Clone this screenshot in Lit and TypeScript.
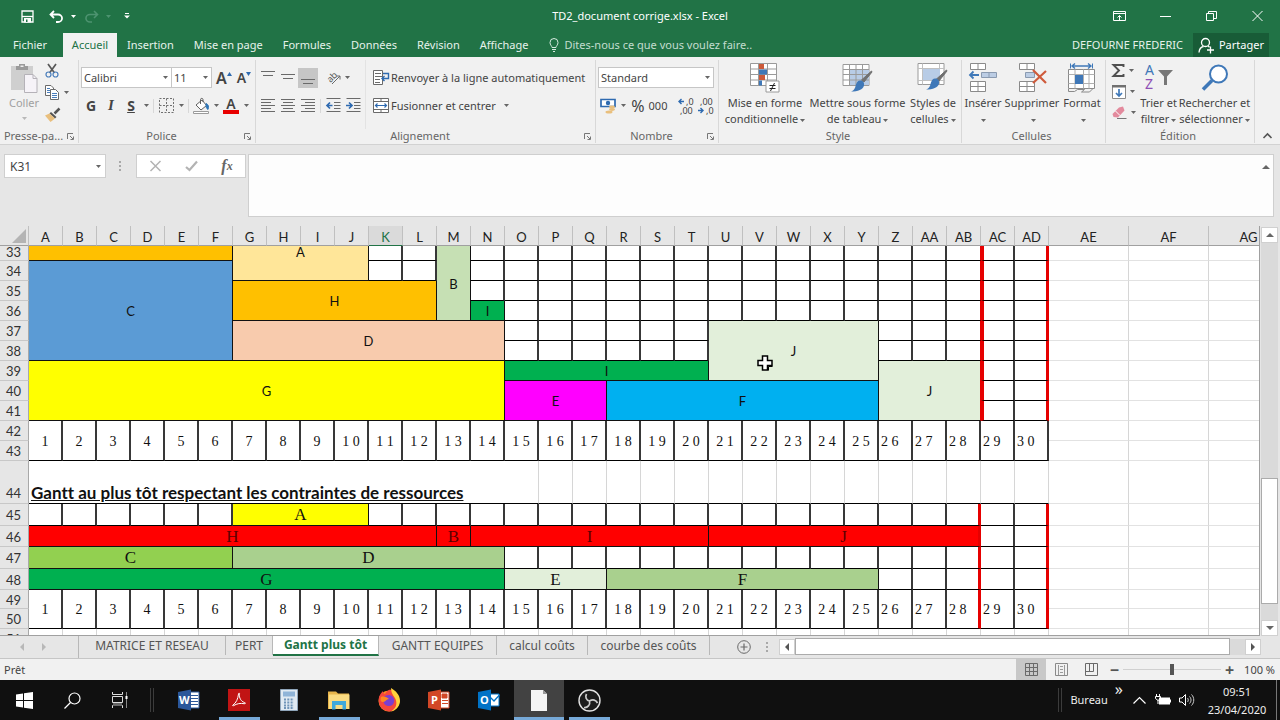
import { LitElement, html, svg, css, nothing } from "lit";
import { customElement, state } from "lit/decorators.js";
import { classMap } from "lit/directives/class-map.js";

type Cell = { text?: string; cls?: string; cols?: number; rows?: number; pointer?: boolean };
type Row = { n: number; size: string; cells: Cell[] };

const COLUMNS = [..."ABCDEFGHIJKLMNOPQRSTUVWXYZ", "AA", "AB", "AC", "AD", "AE", "AF", "AG"];

const box = (count: number): Cell[] => Array.from({ length: count }, () => ({ cls: "box" }));
const faint = (count: number): Cell[] => Array.from({ length: count }, () => ({ cls: "faint" }));
const bar = (text: string, cols: number, rows: number, fill: string, extra = ""): Cell => ({
  text, cols, rows, cls: `bar ${fill} ${extra}`,
});
const limit: Cell[] = [{ cls: "box late" }, { cls: "box end" }];
const limitLow: Cell[] = [{ cls: "box" }, { cls: "box end" }];
const tail = faint(3);

const days = (last: string, end: string): Cell[] =>
  Array.from({ length: 30 }, (_, i) => ({
    text: String(i + 1).split("").join(" "),
    rows: 2,
    cls: `box day ${i > 24 ? "near" : ""} ${i === 27 ? last : ""} ${i === 29 ? end : ""}`,
  }));

const ROWS: Row[] = [
  { n: 33, size: "cut", cells: [bar("", 6, 1, "orange"), bar("A", 4, 2, "cream", "top"), ...box(2), bar("B", 1, 4, "sage"), ...box(14), { cls: "box before" }, ...limit, ...tail] },
  { n: 34, size: "std", cells: [bar("C", 6, 5, "blue"), ...box(2), ...box(14), { cls: "box before" }, ...limit, ...tail] },
  { n: 35, size: "std", cells: [bar("H", 6, 2, "orange"), ...box(14), { cls: "box before" }, ...limit, ...tail] },
  { n: 36, size: "std", cells: [bar("I", 1, 1, "green"), ...box(13), { cls: "box before" }, ...limit, ...tail] },
  { n: 37, size: "std", cells: [bar("D", 8, 2, "peach"), ...box(6), { ...bar("J", 5, 3, "mint"), pointer: true }, ...box(2), { cls: "box before" }, ...limit, ...tail] },
  { n: 38, size: "std", cells: [...box(6), ...box(2), { cls: "box before" }, ...limit, ...tail] },
  { n: 39, size: "std", cells: [bar("G", 14, 3, "yellow"), bar("I", 6, 1, "green"), bar("J", 3, 3, "mint", "before"), ...limit, ...tail] },
  { n: 40, size: "std", cells: [bar("E", 3, 2, "magenta"), bar("F", 8, 2, "sky"), ...limit, ...tail] },
  { n: 41, size: "std", cells: [...limit, ...tail] },
  { n: 42, size: "std", cells: [...days("", ""), ...tail] },
  { n: 43, size: "std", cells: tail },
  { n: 44, size: "tall", cells: [{ text: "Gantt au plus tôt respectant les contraintes de ressources", cols: 14, cls: "heading" }, ...Array.from({ length: 16 }, () => ({ cls: "faint over" })), ...tail] },
  { n: 45, size: "big", cells: [...box(6), bar("A", 4, 1, "yellow", "serif"), ...box(17), { cls: "box low" }, ...limitLow, ...tail] },
  { n: 46, size: "mid", cells: [bar("H", 12, 1, "red", "serif"), bar("B", 1, 1, "red", "serif"), bar("I", 7, 1, "red", "serif"), bar("J", 8, 1, "red", "serif low"), ...limitLow, ...tail] },
  { n: 47, size: "big", cells: [bar("C", 6, 1, "lime", "serif"), bar("D", 8, 1, "leaf", "serif"), ...box(13), { cls: "box low" }, ...limitLow, ...tail] },
  { n: 48, size: "mid", cells: [bar("G", 14, 1, "green", "serif"), bar("E", 3, 1, "mint", "serif"), bar("F", 8, 1, "leaf", "serif"), ...box(2), { cls: "box low" }, ...limitLow, ...tail] },
  { n: 49, size: "small", cells: [...days("low", "end"), ...tail] },
  { n: 50, size: "std", cells: tail },
  { n: 51, size: "std", cells: faint(33) },
];

const icon = (w: number, h: number, body: unknown, cls = "") =>
  html`<svg class=${cls} width=${w} height=${h} viewBox="0 0 ${w} ${h}" fill="none" aria-hidden="true">${body}</svg>`;

const caret = html`<svg class="caret" width="5" height="3" viewBox="0 0 5 3" aria-hidden="true"><path d="M0 0h5L2.500 3z" fill="currentColor" /></svg>`;

const lines = (rows: [number, number, number][]) =>
  icon(14, 16, svg`${rows.map(([x, y, w]) => svg`<path d="M${x} ${y}.5h${w}" stroke="#6a6a6a" />`)}`);

const ICONS = {
  save: icon(13, 13, svg`<path d="M1 1h11v11H1z" stroke="#fff" stroke-width="1.300"/><path d="M1 6.500h11" stroke="#fff" stroke-width="1.300"/><path d="M3 8h7v4.500H3z" fill="#fff"/><path d="M5 9.500h1.500V12H5z" fill="#217346"/>`),
  undo: icon(15, 13, svg`<path d="M5 1 1.500 4.500 5 8M2 4.500h7a4 3.700 0 0 1 0 7.500H7" stroke="#fff" stroke-width="1.800"/>`),
  redo: icon(15, 13, svg`<path d="m10 1 3.500 3.500L10 8M13 4.500H6A4 3.700 0 0 0 6 12h2" stroke="#4d9370" stroke-width="1.600"/>`),
  qat: icon(6, 6, svg`<path d="M1 .5h4" stroke="#fff"/><path d="M0 2.500h6L3 5.500z" fill="#fff"/>`),
  display: icon(13, 10, svg`<path d="M.5.5h12v9H.5zM.5 2.500h12M6.500 9V4.500M4.500 6.500l2-2 2 2" stroke="#fff"/>`),
  min: icon(11, 10, svg`<path d="M0 5.500h11" stroke="#fff"/>`),
  restore: icon(11, 10, svg`<path d="M.5 2.500h7v7h-7zM2.500 2.500v-2h8v7h-3" stroke="#fff"/>`),
  close: icon(11, 10, svg`<path d="m.5 0 10 10M10.500 0l-10 10" stroke="#fff"/>`),
  bulb: icon(10, 14, svg`<path d="M3 9.500C3 8 1 7 1 4.500a4 4 0 0 1 8 0C9 7 7 8 7 9.500zM3 11.500h4M4 13.500h2" stroke="#d7eadf"/>`),
  share: icon(17, 17, svg`<circle cx="7.500" cy="5.500" r="4" stroke="#fff" stroke-width="1.300"/><path d="M1 15.500c.3-3.500 2-5.500 4.500-6M10 9l1.500 1.200M12.500 9.500v7M9 13h7" stroke="#fff" stroke-width="1.300"/>`),
  paste: icon(28, 30, svg`<path d="M1 3h22v24H1z" fill="#cfcfcf"/><path d="M6 3h3V1h6v2h3v4H6z" fill="#9b9b9b"/><path d="M10.500 2.500h3v1.500h-3z" fill="#eee"/><path d="M14.500 11.500h8.500l4 4v14H14.500z" fill="#f6f3f8" stroke="#b5b2b8"/><path d="M23 11.500v4h4" stroke="#b5b2b8"/>`),
  cut: icon(14, 15, svg`<path d="m3 1 6.500 9M11 1 4.500 10" stroke="#585858" stroke-width="1.700"/><circle cx="3.500" cy="11.500" r="2.500" stroke="#4a7ebb" stroke-width="1.200"/><circle cx="10.500" cy="11.500" r="2.500" stroke="#4a7ebb" stroke-width="1.200"/>`),
  copy: icon(15, 15, svg`<path d="M.5.500h5.500l2.500 2.500v7.500h-8z" fill="#fff" stroke="#6a6a6a"/><path d="M2 3.500h3M2 5.500h4M2 7.500h4" stroke="#4a7ebb"/><path d="M5.500 4.500h5l3 3v7h-8z" fill="#fff" stroke="#6a6a6a"/><path d="M7 8.500h5M7 10.500h5M7 12.500h5" stroke="#4a7ebb"/>`),
  brush: icon(16, 14, svg`<path d="m14.500.500-5 5" stroke="#555" stroke-width="2.500"/><path d="m6 4 5.500 5-1.500 1.500L4.500 5.500z" fill="#555"/><path d="M4.500 5.500 10 10.500 5.500 14 0 7.500z" fill="#e9bf7d"/>`),
  tipUp: icon(5, 4, svg`<path d="M0 4h5L2.500 0z" fill="#2e6ab0"/>`, "tip"),
  tipDown: icon(5, 4, svg`<path d="M0 0h5L2.500 4z" fill="#2e6ab0"/>`, "tip"),
  borders: icon(15, 15, svg`<path d="M.5.500h14v14H.5zM7.500.500v14M.5 7.500h14" stroke="#6f6f6f" stroke-dasharray="2 1.500"/>`),
  fill: icon(17, 16, svg`<path d="m3 7 6-5 4.500 5.500L8 12z" fill="#fff" stroke="#606060"/><path d="M7.500 6V1.500C7.500 0 10 0 10 1.500V4" stroke="#606060"/><path d="M13 5.500c2.500 1 3 3 2 6-1.500-1-2-2.500-2-4z" fill="#2e75b6" stroke="#2e75b6"/><path d="M.5 13.500h15v2H.5z" fill="#fff" stroke="#9a9a9a"/>`),
  orient: icon(16, 14, svg`<g transform="rotate(-45 8 7)"><text x="2" y="8" font-size="9" font-family="Noto Sans, sans-serif" fill="#555">ab</text></g><path d="m6 13 8-8M14 8.500V5h-3.500" stroke="#6a6a6a"/>`),
  outdent: icon(15, 15, svg`<path d="M.5.500h14M8 4.500h6.500M8 7.500h6.500M8 10.500h6.500M.5 13.500h14" stroke="#6a6a6a"/><path d="M6.500 7.500H1M4 4.500l-3 3 3 3" stroke="#2e6ab0" stroke-width="1.700"/>`),
  indent: icon(15, 15, svg`<path d="M.5.500h14M8 4.500h6.500M8 7.500h6.500M8 10.500h6.500M.5 13.500h14" stroke="#6a6a6a"/><path d="M0 7.500h5.500M3 4.500l3 3-3 3" stroke="#2e6ab0" stroke-width="1.700"/>`),
  wrap: icon(16, 15, svg`<path d="M.5.500h9v14h-9z" fill="#fff" stroke="#6a6a6a"/><path d="M2 3.500h6M2 6.500h8M2 9.500h5M2 12.500h5" stroke="#6a6a6a"/><path d="M10 3.500h5.500v5H9M11.500 6 9 8.500l2.500 2.500" stroke="#2e6ab0" stroke-width="1.400"/>`),
  merge: icon(16, 15, svg`<path d="M.5.500h15v14H.5z" fill="#fff" stroke="#6a6a6a"/><path d="M.5 3.500h15M.5 11.500h15M8 .5v3M8 11.500v3" stroke="#6a6a6a"/><path d="M2 7.500h12M4.500 5.500l-2 2 2 2M11.500 5.500l2 2-2 2" stroke="#2e6ab0" stroke-width="1.200"/>`),
  money: icon(16, 16, svg`<path d="M1 1.500h14v7H1z" fill="#fff" stroke="#2e6ab0" stroke-width="1.700"/><circle cx="8" cy="5" r="2.200" fill="#2e6ab0"/><ellipse cx="12" cy="9" rx="3" ry="1.400" fill="#e9bf7d"/><ellipse cx="12" cy="11.500" rx="3" ry="1.400" fill="#e9bf7d"/><ellipse cx="9" cy="14" rx="3.500" ry="1.500" fill="#e9bf7d"/>`),
  moreDec: icon(16, 18, svg`<path d="M6 4.500H1M3.500 2 1 4.500 3.500 7" stroke="#2e6ab0" stroke-width="1.400"/><text x="8" y="8" font-size="9" fill="#444">,0</text><text x="2" y="17" font-size="9" fill="#444">,00</text>`),
  lessDec: icon(16, 18, svg`<path d="M0 13.500h5M2.500 11 5 13.500 2.500 16" stroke="#2e6ab0" stroke-width="1.400"/><text x="2" y="8" font-size="9" fill="#444">,00</text><text x="8" y="17" font-size="9" fill="#444">,0</text>`),
  condFmt: icon(30, 30, svg`<path d="M.5.500h26v22H.5z" fill="#fff" stroke="#9a9a9a"/><path d="M.5 6h26M.5 11.500h26M.5 17h26M8.500.500v22M17.500.500v22" stroke="#9a9a9a"/><path d="M9 1h5v5H9z" fill="#cc5a3a"/><path d="M9 6.500h8v5H9z" fill="#3f78b8"/><path d="M9 12h6v5H9z" fill="#cc5a3a"/><path d="M9 17.500h3v5H9z" fill="#3f78b8"/><path d="M16 18h13v11H16z" fill="#fff" stroke="#9a9a9a"/><path d="M19.500 22.500h6M19.500 25.500h6M24.500 20l-4 8" stroke="#222"/>`),
  tableFmt: icon(32, 30, svg`<path d="M1 1.500h26v21H1z" fill="#fff" stroke="#9a9a9a"/><path d="M7 7h20v15H7z" fill="#b8cce6"/><path d="M1 6.500h26M1 11.500h26M1 17h26M7.500 1v21M14 1v21M20.500 1v21" stroke="#9a9a9a"/><path d="m30 9-8 10-2.500-2L29.500 8z" fill="#707070" stroke="#707070"/><path d="M18 17.500c3 0 4.500 2 4 5-1 4-6 6-13 6 4-1.500 4-4 5-7 1-2.500 2-4 4-4z" fill="#3f78b8"/>`),
  cellFmt: icon(32, 30, svg`<path d="M1 .5h26v21H1z" fill="#fff" stroke="#9a9a9a"/><path d="M1 5.500h26M5.500.500v21M22.500.500v21M1 17.500h26" stroke="#c0c0c0"/><path d="M6 6h17v11H6z" fill="#b8cce6"/><path d="m30 8-8 10-2.500-2L29.500 7z" fill="#707070" stroke="#707070"/><path d="M18 15.500c3 0 4.500 2 4 5-1 4-6 6-13 6 4-1.500 4-4 5-7 1-2.500 2-4 4-4z" fill="#3f78b8"/>`),
  insert: icon(30, 30, svg`<path d="M2.500.500h15v6h-15zM10 .5v6M2.500 18.500h15v10h-15zM10 18.500v10M2.500 23.500h15" fill="#fff" stroke="#8a8a8a"/><path d="M13.500 9.500h15v5h-15zM21 9.500v5" fill="#bccde4" stroke="#8a9ab0"/><path d="M11 12H2M5.500 8.500 2 12l3.500 3.500" stroke="#3f78b8" stroke-width="1.800"/>`),
  remove: icon(30, 30, svg`<path d="M2.500.500h15v6h-15zM10 .5v6M2.500 18.500h15v10h-15zM10 18.500v10M2.500 23.500h15" fill="#fff" stroke="#8a8a8a"/><path d="M8.500 9.500h9v5h-9z" fill="#bccde4" stroke="#8a9ab0"/><path d="m16 7 13 13M29 8 16 20" stroke="#cf5b3c" stroke-width="2.200"/>`),
  format: icon(30, 30, svg`<path d="M1.500 6.500h26v19h-26z" fill="#fff" stroke="#8a8a8a"/><path d="M1.500 11.500h26M1.500 20.500h26M8 6.500v19M16.500 6.500v19M22 6.500v19" stroke="#b0b0b0"/><path d="M8 12h8v9H8z" fill="#3f78b8"/><path d="M1.500 26v2.500h6l3-2h7l-3 2.500h8l3-3" stroke="#8a8a8a"/><path d="M5 3h19M8 .5 5 3l3 2.500M21 .5 24 3l-3 2.500" stroke="#3f78b8" stroke-width="1.400"/><path d="M3.500.500v5M25.500.500v5" stroke="#3f78b8"/>`),
  sum: icon(13, 13, svg`<path d="M11.500 3V1H1.500l5.500 5.500L1.500 12h10v-2" stroke="#505050" stroke-width="1.900"/>`),
  fillDown: icon(14, 15, svg`<path d="M.5 1.500h13v13H.5z" fill="#fff" stroke="#8a8a8a"/><path d="M0 1h14v2.500H0z" fill="#707070"/><path d="M7 5v7M4 9l3 3 3-3" stroke="#3f78b8" stroke-width="1.700"/>`),
  eraser: icon(15, 14, svg`<path d="M7 1.500 11 .5l1.500 4L6 11.500 1.500 11 .5 8z" fill="#e38a9d"/><path d="m3.500 5 4.500 4.500" stroke="#fff"/><path d="M5 12.500h9.500" stroke="#777"/>`),
  sort: icon(28, 30, svg`<text x="0" y="12" font-size="14" font-family="Noto Sans, sans-serif" fill="#3f78b8">A</text><text x="0" y="26" font-size="14" font-family="Noto Sans, sans-serif" fill="#8e4fb5">Z</text><path d="M13 7h15l-6 6.500V22h-3v-8.500z" fill="#777"/>`),
  find: icon(28, 30, svg`<circle cx="17.500" cy="11" r="8.500" fill="#fff" stroke="#3f78b8" stroke-width="2"/><path d="m11 17.500-9 9" stroke="#3f78b8" stroke-width="3.600"/>`),
  launcher: icon(7, 7, svg`<path d="M.5 6V.500H6M3 3l3 3M6.500 3.500v3h-3" stroke="#777"/>`),
  collapse: icon(9, 6, svg`<path d="m.5 5 4-4 4 4" stroke="#555" stroke-width="1.600"/>`),
  cancel: icon(11, 10, svg`<path d="m.5 0 10 10M10.500 0l-10 10" stroke="#b3b3b3" stroke-width="1.500"/>`),
  accept: icon(13, 10, svg`<path d="m1 6 3.500 3L12 .5" stroke="#b3b3b3" stroke-width="2.200"/>`),
  dots: icon(2, 12, svg`<path d="M0 0h2v2H0zM0 4h2v2H0zM0 8h2v2H0z" fill="#a8a8a8"/>`),
  left: icon(4, 8, svg`<path d="M4 0v8L0 4z" fill="currentColor"/>`),
  right: icon(4, 8, svg`<path d="M0 0v8l4-4z" fill="currentColor"/>`),
  up: icon(8, 4, svg`<path d="M0 4h8L4 0z" fill="currentColor"/>`),
  down: icon(8, 4, svg`<path d="M0 0h8L4 4z" fill="currentColor"/>`),
  plus: icon(14, 14, svg`<circle cx="7" cy="7" r="6.300" stroke="#6a6a6a"/><path d="M3.500 7h7M7 3.500v7" stroke="#6a6a6a" stroke-width="1.200"/>`),
  corner: icon(14, 14, svg`<path d="M14 0v14H0z" fill="#b4b4b4"/>`),
  pointer: icon(16, 16, svg`<path d="M5.500 1h5v4.500H15v5h-4.500V15h-5v-4.500H1v-5h4.500z" fill="#fff" stroke="#000" stroke-width="1.500"/><path d="M11.500 15.500v-4h4" stroke="#000" stroke-width="1"/>`, "pointer"),
  normal: icon(13, 13, svg`<path d="M.5.500h12v12H.5zM4.500.500v12M8.500.500v12M.5 4.500h12M.5 8.500h12" stroke="#6a6a6a"/>`),
  layout: icon(13, 13, svg`<path d="M.5.500h12v12H.5z" stroke="#8a8a8a"/><path d="M3.500 2v10M9.500 2v10M5 3.500h3M5 6.500h3M5 9.500h3" stroke="#9a9a9a"/>`),
  breaks: icon(13, 13, svg`<path d="M.5.500h12v12H.5zM.5 8.500h8v-8M4.500.500v8" stroke="#6a6a6a"/>`),
  windows: icon(17, 17, svg`<path d="m0 2.500 7-1V8H0zM8 1.300 17 0v8H8zM0 9h7v6.500l-7-1zM8 9h9v8l-9-1.300z" fill="#fff"/>`),
  search: icon(17, 17, svg`<circle cx="10.500" cy="6.500" r="5.500" stroke="#fff" stroke-width="1.200"/><path d="M6.500 10.500.500 16.500" stroke="#fff" stroke-width="1.200"/>`),
  tasks: icon(17, 16, svg`<path d="M.5 0v2.500h10V0M.5 16v-2.500h10V16M.5 4.500h10v6H.5z" stroke="#ddd"/><path d="M1 11h9v3H1z" fill="#666"/><path d="M14.500 0v16" stroke="#888"/><path d="M13.500 4h2v3h-2z" fill="#fff"/>`),
  word: icon(22, 22, svg`<path d="M10 3h11v16H10z" fill="#fff" stroke="#2b579a"/><path d="M13 6.500h7M13 9.500h7M13 12.500h7M13 15.500h7" stroke="#2b579a"/><path d="m0 3 13-2.500v21L0 19z" fill="#2b579a"/><text x="1" y="15" font-size="11" font-weight="700" font-family="Open Sans, sans-serif" fill="#fff">W</text>`),
  acrobat: icon(22, 22, svg`<path d="M0 0h22v22H0z" fill="#c11414"/><path d="M5 16c3-2 5-6 5.500-11 .2-1.500 1.500-1 1 .5-.6 3 1.500 7 5 8 1.500.5 1 1.500-.5 1.200-3.500-.7-7-.2-10.500 2-.8.400-1.300-.2-.5-.7z" stroke="#fff"/>`),
  calc: icon(18, 22, svg`<path d="M.5.500h17v21H.5z" fill="#dfe9f2" stroke="#8fa5ba"/><path d="M3 2.500h12v5H3z" fill="#8fb4d8"/><path d="M4 10.500h10M4 13.500h10M4 16.500h10M4 19h10" stroke="#6f94b8" stroke-width="2" stroke-dasharray="2 1.300"/>`),
  folder: icon(22, 20, svg`<path d="M0 1.500h8l2 2h11V19H0z" fill="#e8b64c"/><path d="M1 4.500h20.500V19H1z" fill="#fbdc82"/><path d="M4 11h14v8.500h-3.500V15h-7v4.500H4z" fill="#3fa9dc"/>`),
  firefox: icon(24, 24, svg`<circle cx="12" cy="13" r="10.500" fill="#ff8a1f"/><path d="M2 9C3 6 5 4 6 3c0 2 1 3 2 3 1-2 3-4 5-4.500 3 1 6 2 8 6 3 6 0 13-6 15.500C8 25 0 19 2 9z" fill="#f5473c"/><path d="M14 0c5 3 9 7 9 13 0 5-4 9.500-9 10.500 5-3 6-7 5-11-1-4-5-6-5-12.500z" fill="#ffd23c"/><path d="M7 9c2-2 6-3 9 0 3 4 0 10-5 9-5-1-5-5-4-9z" fill="#7a3fd0"/><path d="M4 9c3-1 6 0 8 2-3 0-3 3-6 3-2 0-3-2-2-5z" fill="#ff8a1f"/>`),
  ppt: icon(22, 22, svg`<path d="M10 3h11v16H10z" fill="#fff" stroke="#d24726"/><path d="M14 5h5v4h-5zM14 11.500h6M14 14.500h6" fill="#d24726" stroke="#d24726"/><path d="m0 3 13-2.500v21L0 19z" fill="#d24726"/><text x="3" y="15" font-size="11" font-weight="700" font-family="Open Sans, sans-serif" fill="#fff">P</text>`),
  outlook: icon(22, 22, svg`<path d="M11 5h10v12H11z" fill="#fff" stroke="#0072c6"/><path d="m12 8 4 4 5.500-6" stroke="#0072c6" stroke-width="1.300"/><path d="m0 3 13-2.500v21L0 19z" fill="#0072c6"/><text x="2" y="15" font-size="11" font-weight="700" font-family="Open Sans, sans-serif" fill="#fff">O</text>`),
  file: icon(16, 21, svg`<path d="M0 0h12l4 4v17H0z" fill="#f4f4f4"/><path d="M12 0v4h4z" fill="#999"/>`),
  obs: icon(23, 23, svg`<circle cx="11.500" cy="11.500" r="10.500" fill="#1c1c1c" stroke="#e2e2e2" stroke-width="1.400"/><path d="M11.500 12C8 11 7 8 8.500 5M11.500 12c3.500-2 6.500-1 8 2M11.500 12c1 4-2 7-5.500 6.500" stroke="#ccc" stroke-width="1.700"/>`),
  chevUp: icon(13, 8, svg`<path d="m.5 7.500 6-6 6 6" stroke="#fff" stroke-width="1.200"/>`),
  battery: icon(16, 12, svg`<path d="M4 3.500h11v7H4z" fill="#fff"/><path d="M15 5.500h1v3h-1z" fill="#fff"/><path d="M1.500 0v2.500M4.500 0v2.500M.5 2.500h5v2L3 6.500.500 4.500zM3 6v4" stroke="#fff"/>`),
  volume: icon(16, 14, svg`<path d="M.5 5h2.500l3.500-3.500v11L3 9H.500z" stroke="#fff"/><path d="M8.500 5c1 1 1 3 0 4M10.500 3.500c2 2 2 5 0 7M12.500 1.500c3 3 3 8 0 11" stroke="#ccc"/>`),
};

@customElement("app-root")
export class AppRoot extends LitElement {
  @state() private sheet = "Gantt plus tôt";

  static styles = css`
    :host { display: flex; flex-direction: column; height: 100vh; overflow: hidden; background: #e6e6e6; color: #444; font: 11px/16px "Noto Sans", "Open Sans", sans-serif; }
    * { box-sizing: border-box; }
    button, input, select, textarea { font: inherit; color: inherit; margin: 0; padding: 0; border: 0; background: none; border-radius: 0; white-space: nowrap; }
    button { display: flex; align-items: center; justify-content: center; }
    svg { display: block; flex: none; overflow: visible; }
    .caret { color: #666; }

    .title { display: flex; align-items: center; height: 32px; flex: none; background: #217346; color: #fff; }
    .quick { display: flex; align-items: center; gap: 8px; flex: 1; }
    .quick button:first-child { margin-left: 21px; }
    .quick button:nth-child(2) { margin-left: 7px; }
    .quick .caret { color: #fff; margin-left: 7px; }
    .quick .dim .caret { color: #4d9370; }
    .quick button:last-child { margin-left: 5px; }
    .window { display: flex; flex: 1; justify-content: flex-end; }
    .window button { width: 46px; height: 30px; }
    .menu { display: flex; align-items: stretch; height: 25px; flex: none; background: #217346; color: #e6f2eb; }
    .menu button { padding: 0 10px; }
    .menu button.file { width: 63px; padding: 0 16px 0 13px; }
    .menu button.on { width: 54px; background: #f1f1f1; color: #217346; margin-top: 1px; padding: 0; }
    .tell { display: flex; align-items: center; gap: 5px; flex: 1; padding-left: 11px; }
    .tell input { flex: 1; min-width: 0; outline: 0; }
    .tell input::placeholder { color: #c3ddcf; opacity: 1; }
    .menu .user { color: #e6f2eb; }
    .menu .share { background: #185c37; color: #fff; gap: 4px; margin: 1px 11px 0 0; padding: 0 5px; }

    .ribbon { display: flex; height: 88px; flex: none; background: #f1f1f1; border-bottom: 1px solid #d2d2d2; }
    .group { display: flex; flex-direction: column; border-right: 1px solid #d8d8d8; margin: 3px 0 1px; }
    .body { display: flex; flex: 1; }
    .foot { display: flex; align-items: center; height: 14px; padding-right: 4px; color: #666; }
    .foot span { flex: 1; text-align: center; }
    .rows { display: flex; flex-direction: column; gap: 7px; padding-top: 7px; }
    .line { display: flex; align-items: center; height: 21px; }
    .sep { width: 1px; height: 14px; background: #d8d8d8; margin: 0 2px; }
    .w8 { width: 8px; } .w10 { width: 10px; } .w16 { width: 16px; } .w20 { width: 20px; } .w24 { width: 24px; }
    .line button { height: 20px; }
    .line button.on { background: #c6c6c6; }
    .combo { position: relative; display: flex; }
    .combo select { width: 100%; height: 21px; padding-left: 2px; border: 1px solid #c6c6c6; background: #fff; appearance: none; }
    .combo .caret { position: absolute; right: 4px; top: 9px; }
    .name { width: 91px; } .size { width: 41px; margin-left: -1px; } .number { width: 116px; }
    .clip { width: 79px; } .clip .body { padding: 3px 4px 0 4px; gap: 1px; }
    .paste { flex-direction: column; justify-content: flex-start; width: 40px; color: #a0a0a0; gap: 2px; }
    .paste .caret { color: #b8b8b8; margin-top: 4px; }
    .side { display: flex; flex-direction: column; gap: 7px; }
    .side button { height: 15px; gap: 4px; justify-content: flex-start; }
    .police { width: 177px; } .police .body { padding-left: 2px; }
    .g { font-weight: 700; font-size: 14px; } .i { font: italic 700 15px "Liberation Serif", serif; } .s { font-weight: 700; font-size: 14px; text-decoration: underline; }
    .large { font-weight: 600; font-size: 16px; } .less { font-weight: 600; font-size: 14px; }
    .tip { align-self: flex-start; margin-top: 4px; }
    .color { flex-direction: column; font-weight: 600; font-size: 14px; line-height: 12px; }
    .color span { border-bottom: 4px solid #e80000; width: 16px; }
    .align { width: 340px; } .align .body { padding-left: 2px; }
    .align .rows:last-child { padding-left: 7px; border-left: 1px solid #e3e3e3; }
    .shift { width: 107px; }
    .text { gap: 2px; color: #444; } .text .caret { margin-left: 6px; }
    .nombre { width: 123px; } .nombre .body { padding-left: 2px; }
    .pct { font-size: 16px; }
    .tool { flex-direction: column; justify-content: flex-start; padding-top: 3px; gap: 2px; }
    .tool .label { text-align: center; line-height: 16px; }
    .tool .label .caret { display: inline-block; vertical-align: middle; margin-left: 2px; }
    .style { width: 243px; } .style .body { padding-left: 4px; }
    .t84 { width: 84px; } .t101 { width: 101px; } .t50 { width: 50px; }
    .cellules { width: 144px; } .cellules .body { padding-left: 2px; }
    .t38 { width: 38px; } .t60 { width: 60px; } .t40 { width: 40px; }
    .edition { width: 149px; } .edition .body { padding-left: 6px; } .edition .side { width: 28px; padding-top: 3px; gap: 6px; }
    .t37 { width: 37px; } .t75 { width: 75px; }
    .fold { display: flex; flex: 1; align-items: flex-end; justify-content: center; padding-bottom: 5px; }

    .formula { display: flex; align-items: flex-start; height: 81px; flex: none; padding: 9px 6px 9px 4px; }
    .formula .ref { position: relative; width: 102px; }
    .formula .ref input { width: 100%; height: 24px; padding-left: 5px; border: 1px solid #cfcfcf; background: #fff; font-size: 12px; }
    .formula .ref .caret { position: absolute; right: 5px; top: 11px; }
    .formula .grip { padding: 7px 15px 0 13px; }
    .check { display: flex; height: 24px; width: 110px; border: 1px solid #cfcfcf; background: #fff; }
    .check button { flex: 1; }
    .fx { font: italic 700 16px "Liberation Serif", serif; color: #666; }
    .fx small { font-size: 12px; }
    .entry { display: flex; flex: 1; align-self: stretch; margin-left: 2px; background: #fdfdfd; border: 1px solid #cfcfcf; }
    .entry textarea { flex: 1; resize: none; outline: 0; }
    .entry button { width: 15px; height: 24px; color: #666; }

    .work { display: flex; flex: 1; min-height: 0; }
    .sheet { flex: 1; min-width: 0; overflow: hidden; background: #fff; border-right: 1px solid #a0a0a0; border-bottom: 1px solid #a0a0a0; }
    table { table-layout: fixed; width: 1289px; border-collapse: separate; border-spacing: 0; font: 13px/13px "Lato", "Open Sans", sans-serif; color: #111; }
    .c-head { width: 29px; } .c-day { width: 34px; } .c-wide { width: 80px; }
    th, td { padding: 0; font-weight: 400; text-align: center; vertical-align: middle; white-space: nowrap; }
    thead th { height: 20px; padding-top: 3px; background: #e6e6e6; border-right: 1px solid #c0c0c0; border-bottom: 1px solid #a0a0a0; color: #222; }
    thead th.on { background: #dadada; border-bottom-color: #217346; color: #217346; }
    thead th.all { padding: 2px 1px 1px 12px; }
    tbody th, tbody td { padding-top: 2px; }
    tbody th { background: #e6e6e6; border-right: 1px solid #a8a8a8; border-bottom: 1px solid #c8c8c8; color: #333; padding-right: 1px; }
    .cut { height: 15px; } .std { height: 20px; } .tall { height: 43px; } .high { height: 22px; } .mid { height: 21px; } .small { height: 19px; }
    tbody .cut th, tbody td.top { padding-top: 0; vertical-align: top; }
    tbody td.serif { padding-top: 0; }
    .box { border-right: 2px solid #383838; border-bottom: 1px solid #000; }
    .faint { border-right: 1px solid #d6d6d6; border-bottom: 1px solid #e2e2e2; }
    .over { border-bottom-color: #000; }
    .bar { border-right: 1px solid #111; border-bottom: 1px solid #111; position: relative; }
    .before { border-right: 1px solid #e60000; }
    .late { border-left: 3px solid #e60000; }
    .low { border-right: 3px solid #e60000; }
    .end { border-right: 3px solid #e60000; }
    .serif { font: 17px/17px "Liberation Serif", serif; }
    .day { font: 14px/14px "Liberation Serif", serif; }
    tbody td.near { text-align: left; padding-left: 2px; }
    tbody .tall th { vertical-align: bottom; padding-bottom: 3px; }
    tbody td.heading { vertical-align: bottom; text-align: left; padding: 0 0 0 2px; border-bottom: 1px solid #000; font-weight: 700; font-size: 17px; line-height: 21px; text-decoration: underline; font-variant-ligatures: none; }
    .orange { background: #ffc000; } .cream { background: #ffe699; } .sage { background: #c6e0b4; } .blue { background: #5b9bd5; }
    .green { background: #00b050; } .peach { background: #f8cbad; } .mint { background: #e2efda; } .yellow { background: #ffff00; }
    .magenta { background: #ff00ff; } .sky { background: #00b0f0; } .red { background: #ff0000; } .lime { background: #92d050; } .leaf { background: #a9d08e; }
    .red.serif { color: #5c0000; }
    .pointer { position: absolute; left: 48px; top: 34px; }

    .vscroll { display: flex; flex-direction: column; width: 20px; padding: 1px 2px 0 1px; color: #666; }
    .vscroll button { height: 16px; border: 1px solid #d0d0d0; background: #fff; }
    .vtrack { flex: 1; background: #dadada; display: flex; flex-direction: column; }
    .vtrack i { margin-top: 235px; height: 126px; border: 1px solid #ababab; background: #fff; }

    .tabs { display: flex; height: 23px; flex: none; font-size: 12px; border-bottom: 1px solid #c6c6c6; }
    .tabs nav { display: flex; width: 79px; padding-left: 20px; gap: 18px; align-items: center; border-right: 1px solid #b8b8b8; }
    .tabs button { height: 19px; color: #555; border-right: 1px solid #b8b8b8; }
    .tabs nav button { border: 0; color: #b8b8b8; }
    .tabs .m { width: 147px; } .tabs .p { width: 47px; } .tabs .g1 { width: 106px; } .tabs .q { width: 118px; } .tabs .r { width: 91px; } .tabs .t { width: 122px; }
    .tabs .active { background: #fff; color: #217346; font-weight: 700; border-bottom: 2px solid #217346; height: 20px; }
    .tabs .add { border: 0; width: 56px; height: 22px; padding-left: 12px; }
    .hscroll { display: flex; flex: 1; align-items: center; margin-left: 11px; padding-right: 19px; height: 21px; }
    .hscroll button { width: 16px; height: 16px; background: #fff; border: 1px solid #d0d0d0; }
    .hscroll i { flex: 1; height: 17px; background: #fff; border: 1px solid #ababab; }
    .hscroll u { width: 15px; height: 16px; background: #dadada; }
    .tabs .grip { padding-top: 6px; }
    .status { display: flex; align-items: center; height: 21px; flex: none; background: #f1f1f1; padding-left: 4px; padding-right: 5px; }
    .status p { flex: 1; margin: 0; }
    .status button { width: 30px; height: 21px; }
    .status button.on { background: #c8c8c8; }
    .status button.z { width: 17px; font-size: 16px; font-weight: 700; color: #555; }
    .status input { width: 98px; height: 20px; appearance: none; }
    .status input::-webkit-slider-runnable-track { height: 1px; background: #d0d0d0; }
    .status input::-webkit-slider-thumb { appearance: none; width: 4px; height: 11px; margin-top: -5px; background: #555; }
    .status output { width: 37px; text-align: right; }

    .taskbar { display: flex; align-items: stretch; height: 40px; flex: none; background: #101010; color: #eee; }
    .taskbar button { width: 48px; }
    .taskbar .app { width: 50px; border-bottom: 3px solid transparent; border-top: 3px solid transparent; position: relative; }
    .taskbar .run::after { content: ""; position: absolute; left: 5px; right: 4px; bottom: -3px; height: 3px; background: #76a9d8; }
    .taskbar .front { background: #424242; border-top-color: #424242; }
    .taskbar .front::after { left: 0; right: 0; }
    .bars { width: 20px; padding: 8px 0 8px 6px; }
    .bars i { display: block; width: 4px; height: 24px; border: solid #3c3c3c; border-width: 0 1px; }
    .space { flex: 1; }
    .bars.last { width: 16px; padding-left: 4px; }
    .desk { display: flex; align-items: center; padding-right: 4px; }
    .desk sup { align-self: flex-start; padding-top: 1px; margin-left: 7px; font-size: 16px; }
    .taskbar .tray { width: 24px; }
    .clock { display: flex; flex-direction: column; justify-content: center; text-align: center; width: 76px; line-height: 18px; padding-top: 1px; }
    .edge { border-left: 1px solid #777; width: 4px; margin-left: 1px; }
  `;

  private tool(width: string, pic: unknown, first: string, second?: string) {
    return html`<button class="tool ${width}">${pic}<span class="label">${first}<br />${second ?? nothing}${caret}</span></button>`;
  }

  private group(cls: string, label: string, body: unknown, launch = true) {
    return html`<section class="group ${cls}" aria-label=${label}>
      <div class="body">${body}</div>
      <div class="foot"><span>${label}</span>${launch ? ICONS.launcher : nothing}</div>
    </section>`;
  }

  private ribbon() {
    return html`<div class="ribbon">
      ${this.group("clip", "Presse-pa...", html`
        <button class="paste">${ICONS.paste}<span>Coller</span>${caret}</button>
        <div class="side">
          <button aria-label="Couper">${ICONS.cut}</button>
          <button aria-label="Copier">${ICONS.copy}${caret}</button>
          <button aria-label="Reproduire la mise en forme">${ICONS.brush}</button>
        </div>`)}
      ${this.group("police", "Police", html`<div class="rows">
        <div class="line">
          <label class="combo name"><select aria-label="Police"><option>Calibri</option></select>${caret}</label>
          <label class="combo size"><select aria-label="Taille de police"><option>11</option></select>${caret}</label>
          <button class="w24 large" aria-label="Agrandir">A${ICONS.tipUp}</button>
          <button class="w16 less" aria-label="Réduire">A${ICONS.tipDown}</button>
        </div>
        <div class="line">
          <button class="w20 g">G</button><button class="w20 i">I</button><button class="w20 s">S</button>
          <button class="w10" aria-label="Soulignement">${caret}</button><i class="sep"></i>
          <button class="w20" aria-label="Bordures">${ICONS.borders}</button><button class="w10" aria-label="Choix des bordures">${caret}</button><i class="sep"></i>
          <button class="w20" aria-label="Remplissage">${ICONS.fill}</button><button class="w10" aria-label="Choix du remplissage">${caret}</button>
          <button class="w20 color" aria-label="Couleur de police"><span>A</span></button><button class="w10" aria-label="Choix de la couleur">${caret}</button>
        </div></div>`)}
      ${this.group("align", "Alignement", html`<div class="rows shift">
        <div class="line">
          <button class="w20" aria-label="En haut">${lines([[0, 1, 14], [2, 5, 10], [0, 9, 0]])}</button>
          <button class="w20" aria-label="Au milieu">${lines([[0, 4, 14], [2, 8, 10], [0, 12, 0]])}</button>
          <button class="w20 on" aria-label="En bas">${lines([[0, 9, 14], [2, 13, 10]])}</button>
          <i class="w8"></i><button class="w16" aria-label="Orientation">${ICONS.orient}</button><button class="w10" aria-label="Choix">${caret}</button>
        </div>
        <div class="line">
          <button class="w20" aria-label="Gauche">${lines([[0, 1, 14], [0, 4, 10], [0, 7, 14], [0, 10, 10], [0, 13, 14]])}</button>
          <button class="w20" aria-label="Centrer">${lines([[0, 1, 14], [2, 4, 10], [0, 7, 14], [2, 10, 10], [0, 13, 14]])}</button>
          <button class="w20" aria-label="Droite">${lines([[0, 1, 14], [4, 4, 10], [0, 7, 14], [4, 10, 10], [0, 13, 14]])}</button>
          <i class="sep"></i>
          <button class="w20" aria-label="Diminuer le retrait">${ICONS.outdent}</button>
          <button class="w20" aria-label="Augmenter le retrait">${ICONS.indent}</button>
        </div></div>
        <div class="rows">
          <div class="line"><button class="text">${ICONS.wrap}Renvoyer à la ligne automatiquement</button></div>
          <div class="line"><button class="text">${ICONS.merge}Fusionner et centrer ${caret}</button></div>
        </div>`)}
      ${this.group("nombre", "Nombre", html`<div class="rows">
        <div class="line"><label class="combo number"><select aria-label="Format de nombre"><option>Standard</option></select>${caret}</label></div>
        <div class="line">
          <button class="w20" aria-label="Format comptable">${ICONS.money}</button><button class="w10" aria-label="Choix">${caret}</button>
          <button class="w20 pct">%</button><button class="w20">000</button><i class="w8"></i>
          <button class="w20" aria-label="Ajouter une décimale">${ICONS.moreDec}</button>
          <button class="w20" aria-label="Réduire les décimales">${ICONS.lessDec}</button>
        </div></div>`)}
      ${this.group("style", "Style", html`
        ${this.tool("t84", ICONS.condFmt, "Mise en forme", "conditionnelle")}
        ${this.tool("t101", ICONS.tableFmt, "Mettre sous forme", "de tableau")}
        ${this.tool("t50", ICONS.cellFmt, "Styles de", "cellules")}`, false)}
      ${this.group("cellules", "Cellules", html`
        ${this.tool("t38", ICONS.insert, "Insérer")}
        ${this.tool("t60", ICONS.remove, "Supprimer")}
        ${this.tool("t40", ICONS.format, "Format")}`, false)}
      ${this.group("edition", "Édition", html`
        <div class="side">
          <button aria-label="Somme">${ICONS.sum}${caret}</button>
          <button aria-label="Remplir">${ICONS.fillDown}${caret}</button>
          <button aria-label="Effacer">${ICONS.eraser}${caret}</button>
        </div>
        ${this.tool("t37", ICONS.sort, "Trier et", "filtrer")}
        ${this.tool("t75", ICONS.find, "Rechercher et", "sélectionner")}`, false)}
      <button class="fold" aria-label="Réduire le ruban">${ICONS.collapse}</button>
    </div>`;
  }

  private grid() {
    return html`<table>
      <colgroup><col class="c-head" />${COLUMNS.map((_, i) => html`<col class=${i < 30 ? "c-day" : "c-wide"} />`)}</colgroup>
      <thead><tr><th class="all">${ICONS.corner}</th>${COLUMNS.map((c) => html`<th scope="col" class=${classMap({ on: c === "K" })}>${c}</th>`)}</tr></thead>
      <tbody>${ROWS.map((row) => html`<tr class=${row.size === "big" ? "high" : row.size}>
        <th scope="row">${row.n}</th>
        ${row.cells.map((c) => html`<td class=${c.cls ?? ""} colspan=${c.cols ?? 1} rowspan=${c.rows ?? 1}>${c.text ?? nothing}${c.pointer ? ICONS.pointer : nothing}</td>`)}
      </tr>`)}</tbody>
    </table>`;
  }

  private tab(label: string, cls: string) {
    return html`<button class="${cls} ${this.sheet === label ? "active" : ""}" @click=${() => (this.sheet = label)}>${label}</button>`;
  }

  render() {
    return html`
      <header class="title">
        <div class="quick">
          <button aria-label="Enregistrer">${ICONS.save}</button>
          <button aria-label="Annuler">${ICONS.undo}${caret}</button>
          <button class="dim" aria-label="Rétablir">${ICONS.redo}${caret}</button>
          <button aria-label="Personnaliser">${ICONS.qat}</button>
        </div>
        <span>TD2_document corrige.xlsx - Excel</span>
        <div class="window">
          <button aria-label="Affichage du ruban">${ICONS.display}</button><button aria-label="Réduire">${ICONS.min}</button>
          <button aria-label="Restaurer">${ICONS.restore}</button><button aria-label="Fermer">${ICONS.close}</button>
        </div>
      </header>
      <div class="menu">
        <button class="file">Fichier</button><button class="on">Accueil</button>
        ${["Insertion", "Mise en page", "Formules", "Données", "Révision", "Affichage"].map((m) => html`<button>${m}</button>`)}
        <label class="tell">${ICONS.bulb}<input aria-label="Recherche" placeholder="Dites-nous ce que vous voulez faire.." /></label>
        <button class="user">DEFOURNE FREDERIC</button>
        <button class="share">${ICONS.share}Partager</button>
      </div>
      ${this.ribbon()}
      <div class="formula">
        <label class="ref"><input aria-label="Zone Nom" value="K31" />${caret}</label>
        <span class="grip">${ICONS.dots}</span>
        <div class="check">
          <button aria-label="Annuler la saisie">${ICONS.cancel}</button><button aria-label="Valider">${ICONS.accept}</button>
          <button class="fx">f<small>x</small></button>
        </div>
        <div class="entry"><textarea aria-label="Barre de formule"></textarea><button aria-label="Réduire la barre">${ICONS.up}</button></div>
      </div>
      <main class="work">
        <div class="sheet">${this.grid()}</div>
        <div class="vscroll"><button aria-label="Haut">${ICONS.up}</button><div class="vtrack"><i></i></div><button aria-label="Bas">${ICONS.down}</button></div>
      </main>
      <div class="tabs">
        <nav><button aria-label="Feuille précédente">${ICONS.left}</button><button aria-label="Feuille suivante">${ICONS.right}</button></nav>
        ${this.tab("MATRICE ET RESEAU", "m")}${this.tab("PERT", "p")}${this.tab("Gantt plus tôt", "g1")}${this.tab("GANTT EQUIPES", "q")}${this.tab("calcul coûts", "r")}${this.tab("courbe des coûts", "t")}
        <button class="add" aria-label="Nouvelle feuille">${ICONS.plus}</button>
        <span class="grip">${ICONS.dots}</span>
        <div class="hscroll"><button aria-label="Gauche">${ICONS.left}</button><i></i><u></u><button aria-label="Droite">${ICONS.right}</button></div>
      </div>
      <footer class="status">
        <p>Prêt</p>
        <button class="on" aria-label="Normal">${ICONS.normal}</button><button aria-label="Mise en page">${ICONS.layout}</button><button aria-label="Sauts de page">${ICONS.breaks}</button>
        <button class="z">−</button><input type="range" aria-label="Zoom" min="0" max="200" value="100" /><button class="z">+</button>
        <output>100 %</output>
      </footer>
      <div class="taskbar">
        <button aria-label="Démarrer">${ICONS.windows}</button><button aria-label="Rechercher">${ICONS.search}</button><button aria-label="Vue des tâches">${ICONS.tasks}</button>
        <div class="bars"><i></i></div>
        <button class="app" aria-label="Word">${ICONS.word}</button><button class="app run" aria-label="Acrobat">${ICONS.acrobat}</button>
        <button class="app" aria-label="Calculatrice">${ICONS.calc}</button><button class="app run" aria-label="Explorateur">${ICONS.folder}</button>
        <button class="app" aria-label="Firefox">${ICONS.firefox}</button><button class="app" aria-label="PowerPoint">${ICONS.ppt}</button>
        <button class="app" aria-label="Outlook">${ICONS.outlook}</button><button class="app run front" aria-label="Document">${ICONS.file}</button>
        <button class="app run" aria-label="OBS">${ICONS.obs}</button>
        <div class="space"></div>
        <div class="bars last"><i></i></div>
        <div class="desk">Bureau<sup>»</sup></div>
        <button class="tray" aria-label="Icônes cachées">${ICONS.chevUp}</button><button class="tray" aria-label="Batterie">${ICONS.battery}</button><button class="tray" aria-label="Volume">${ICONS.volume}</button>
        <div class="clock"><time>09:51</time><time>23/04/2020</time></div>
        <i class="edge"></i>
      </div>`;
  }
}
